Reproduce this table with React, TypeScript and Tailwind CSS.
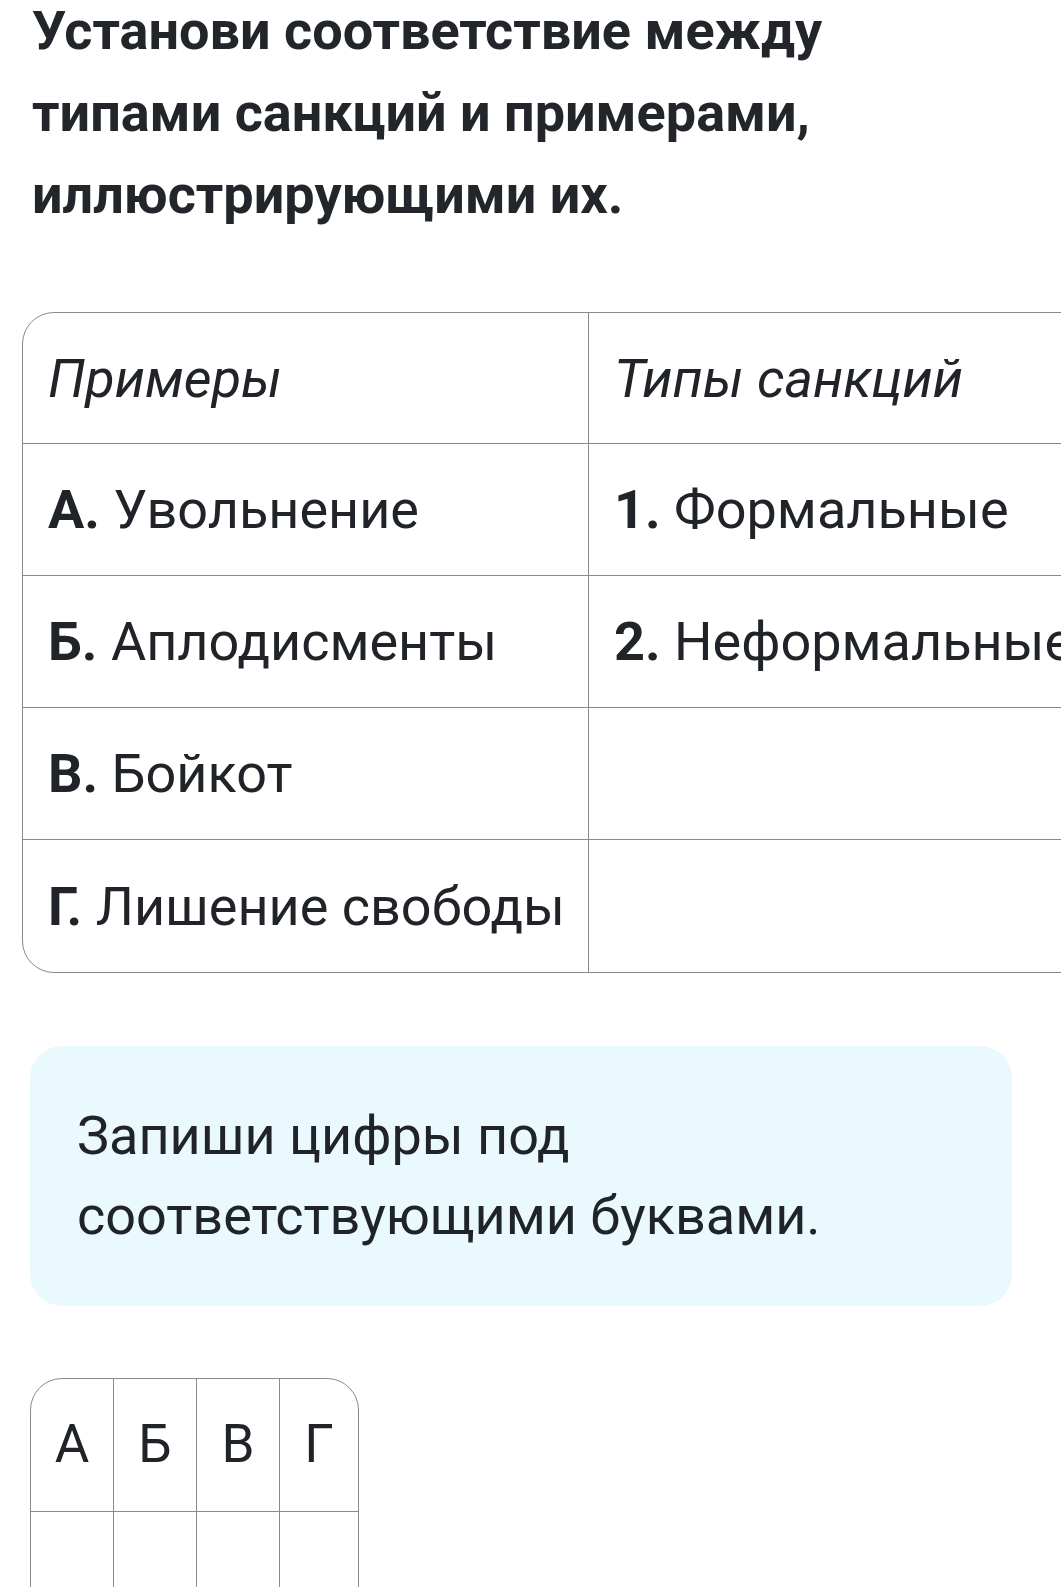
import React from "react";

const rows: { l: string; t: string; nl?: string; nt?: string }[] = [
  { l: "А.", t: "Увольнение", nl: "1.", nt: "Формальные" },
  { l: "Б.", t: "Аплодисменты", nl: "2.", nt: "Неформальные" },
  { l: "В.", t: "Бойкот" },
  { l: "Г.", t: "Лишение свободы" },
];

export default function App() {
  return (
    <div
      className="w-[1061px] h-[1587px] overflow-hidden bg-white text-[#202429]"
      style={{ fontFamily: "Roboto, 'Noto Sans', sans-serif" }}
    >
      <h1 className="mt-[-10px] pl-[32px] text-[54px] leading-[82px] font-bold text-[#22262b]">
        Установи соответствие между
        <br />
        типами санкций и примерами,
        <br />
        иллюстрирующими их.
      </h1>

      <div className="mt-[76px] ml-[22px] w-[1160px] border border-[#8a8a8a] rounded-l-[32px] grid grid-cols-[566px_1fr]">
        <div className="h-[131px] flex items-center pl-[25px] border-r border-b border-[#8a8a8a] text-[54px] italic">
          Примеры
        </div>
        <div className="h-[131px] flex items-center pl-[25px] border-b border-[#8a8a8a] text-[54px] italic">
          Типы санкций
        </div>
        {rows.map((r, i) => (
          <React.Fragment key={i}>
            <div
              className={`h-[132px] flex items-center pl-[25px] border-r border-[#8a8a8a] text-[54px] whitespace-nowrap ${
                i < rows.length - 1 ? "border-b" : ""
              }`}
            >
              <span className="font-bold">{r.l}</span>
              <span>&nbsp;{r.t}</span>
            </div>
            <div
              className={`h-[132px] flex items-center pl-[25px] border-[#8a8a8a] text-[54px] whitespace-nowrap ${
                i < rows.length - 1 ? "border-b" : ""
              }`}
            >
              {r.nl && (
                <>
                  <span className="font-bold">{r.nl}</span>
                  <span>&nbsp;{r.nt}</span>
                </>
              )}
            </div>
          </React.Fragment>
        ))}
      </div>

      <div className="mt-[73px] ml-[30px] w-[982px] rounded-[32px] bg-[#eaf9fd] pl-[47px] pr-[50px] py-[50px] text-[54px] leading-[80px]">
        Запиши цифры под
        <br />
        соответствующими буквами.
      </div>

      <div className="mt-[72px] ml-[30px] w-[329px] border border-[#8a8a8a] rounded-t-[32px] grid grid-cols-[83px_83px_83px_1fr]">
        {["А", "Б", "В", "Г"].map((c, i) => (
          <div
            key={c}
            className={`h-[133px] flex items-center justify-center border-b border-[#8a8a8a] text-[53px] ${
              i < 3 ? "border-r" : ""
            }`}
          >
            {c}
          </div>
        ))}
        {[0, 1, 2, 3].map((i) => (
          <div
            key={i}
            className={`h-[133px] border-[#8a8a8a] ${i < 3 ? "border-r" : ""}`}
          />
        ))}
      </div>
    </div>
  );
}
